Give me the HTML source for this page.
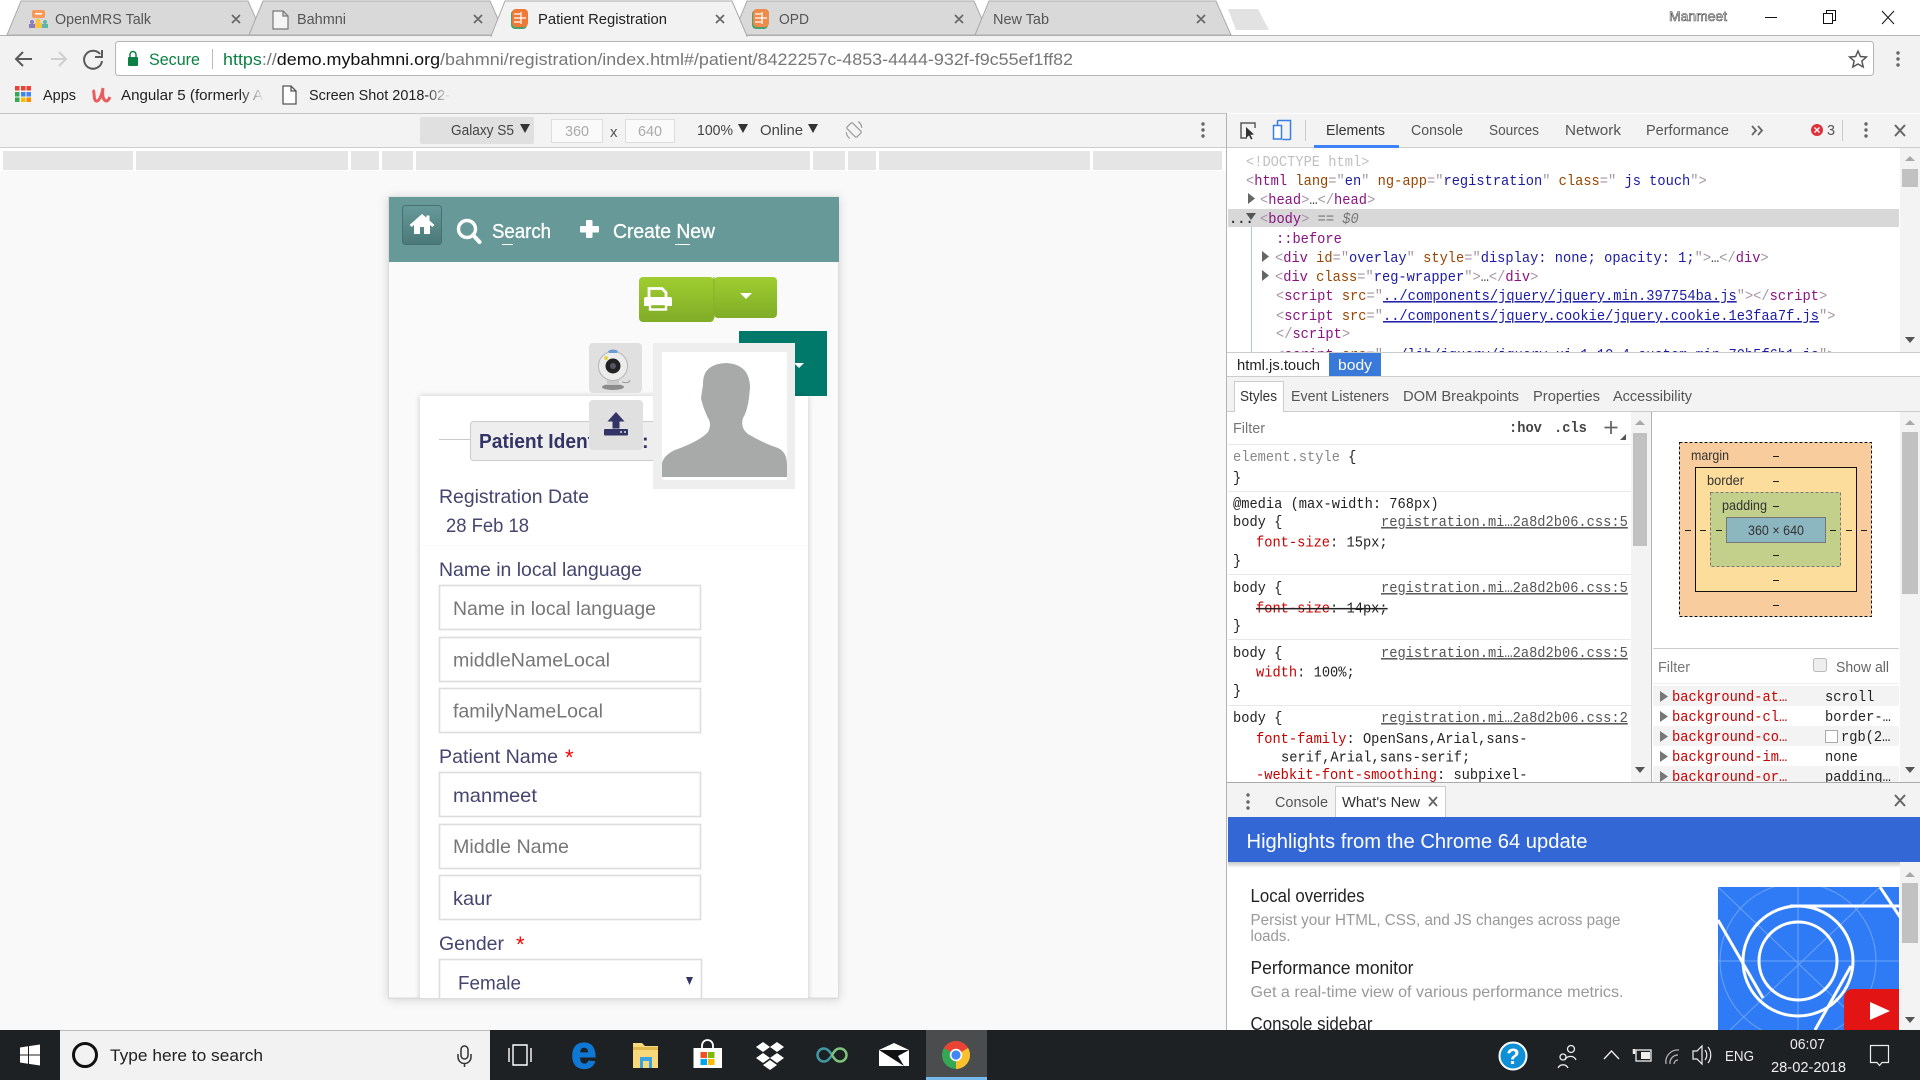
<!DOCTYPE html>
<html lang="en">
<head>
<meta charset="utf-8">
<title>Patient Registration</title>
<style>
html,body{margin:0;padding:0;width:1920px;height:1080px;overflow:hidden;background:#fff}
svg{display:block}
text{font-family:"Liberation Sans",Arial,sans-serif;font-size:15px;fill:#333;white-space:pre}
.m{font-family:"Liberation Mono",monospace;font-size:15px;fill:#222}
.tag{fill:#881280}.pu{fill:#a894a6}.an{fill:#994500}.av{fill:#1a1aa6}.pr{fill:#c80000}.lk{fill:#555;text-decoration:underline}
.t{fill:#555}.d{fill:#5a5a5a}
.o{font-size:19.5px;fill:#45456f}
.ph{font-size:19.5px;fill:#777}
.w{fill:#fff}
.tb{fill:#fff;stroke:#ddd;stroke-width:1.6}
</style>
</head>
<body>
<svg xmlns="http://www.w3.org/2000/svg" width="1920" height="1080" viewBox="0 0 1920 1080">
<defs>
<filter id="s" x="-10%" y="-10%" width="120%" height="120%"><feDropShadow dx="0" dy="0" stdDeviation="3" flood-color="#000" flood-opacity=".2"/></filter>
<filter id="s2" x="-10%" y="-10%" width="120%" height="120%"><feDropShadow dx="0" dy="1" stdDeviation="5" flood-color="#000" flood-opacity=".16"/></filter>
<clipPath id="vp"><rect x="380" y="197" width="470" height="801"/></clipPath>
<clipPath id="pic"><rect x="1718" y="887" width="181" height="143"/></clipPath>
<linearGradient id="home" x1="0" y1="0" x2="0" y2="1"><stop offset="0" stop-color="#669a9a"/><stop offset="1" stop-color="#4b7878"/></linearGradient>
<linearGradient id="gr" x1="0" y1="0" x2="0" y2="1"><stop offset="0" stop-color="#9fce30"/><stop offset="1" stop-color="#80ac27"/></linearGradient>
<linearGradient id="fade" x1="0" y1="0" x2="1" y2="0"><stop offset="0" stop-color="#f2f2f2" stop-opacity="0"/><stop offset="1" stop-color="#f2f2f2"/></linearGradient>
<linearGradient id="hs" x1="0" y1="0" x2="0" y2="1"><stop offset="0" stop-color="#000" stop-opacity=".22"/><stop offset="1" stop-color="#000" stop-opacity="0"/></linearGradient>
</defs>

<!-- window / tab strip -->
<rect width="1920" height="1080" fill="#fff"/>
<rect y="35" width="1920" height="78" fill="#f2f2f2"/>
<rect y="35" width="1920" height="1" fill="#b3b3b3"/>
<polygon points="7,35 21,1 248,1 263,35" fill="#d9d9d9" stroke="#aaa"/>
<polygon points="249,35 263,1 490,1 505,35" fill="#d9d9d9" stroke="#aaa"/>
<polygon points="733,35 747,1 974,1 989,35" fill="#d9d9d9" stroke="#aaa"/>
<polygon points="975,35 989,1 1216,1 1231,35" fill="#d9d9d9" stroke="#aaa"/>
<polygon points="491,36 505,1 732,1 747,36" fill="#f2f2f2" stroke="#aaa"/>
<rect x="492" y="35" width="254" height="2" fill="#f2f2f2"/>
<polygon points="1228,9 1258,9 1269,30 1236,30" fill="#e2e2e2"/>

<!-- tab icons -->
<rect x="32" y="10" width="13" height="8" rx="2" fill="#f79a5b"/><rect x="35" y="13" width="7" height="1.5" fill="#fff"/>
<circle cx="32" cy="22" r="2" fill="#8c7ac0"/><rect x="29" y="24" width="6" height="4" fill="#8c7ac0"/>
<circle cx="38" cy="21" r="2.4" fill="#f7c340"/><rect x="35" y="23" width="7" height="5" fill="#f7c340"/>
<circle cx="45" cy="22" r="2" fill="#5cb5a8"/><rect x="42" y="24" width="6" height="4" fill="#5cb5a8"/>
<path d="M273 11h10l5 5v13h-15z M283 11v5h5" fill="#f4f4f4" stroke="#777" stroke-width="1.2"/>
<rect x="511" y="10" width="16" height="19" rx="4" fill="#4aa36e"/><rect x="512" y="9" width="16" height="18" rx="4" fill="#ee7a35"/><path d="M514 14h6M514 18h12M514 22h6M521 12v12" stroke="#fff" stroke-width="1.3" fill="none"/>
<rect x="752" y="10" width="16" height="19" rx="4" fill="#4aa36e"/><rect x="753" y="9" width="16" height="18" rx="4" fill="#ee8a4a"/><path d="M755 14h6M755 18h12M755 22h6M762 12v12" stroke="#fff" stroke-width="1.3" fill="none"/>

<!-- tab text -->
<text x="55" y="24" textLength="96" lengthAdjust="spacingAndGlyphs" class="t">OpenMRS Talk</text>
<text x="297" y="24" textLength="49" lengthAdjust="spacingAndGlyphs" class="t">Bahmni</text>
<text x="538" y="24" textLength="129" lengthAdjust="spacingAndGlyphs" style="fill:#222">Patient Registration</text>
<text x="779" y="24" textLength="30" lengthAdjust="spacingAndGlyphs" class="t">OPD</text>
<text x="993" y="24" textLength="56" lengthAdjust="spacingAndGlyphs" class="t">New Tab</text>
<g stroke="#666" stroke-width="1.7" fill="none">
<path d="M232 15l8 8M240 15l-8 8M474 15l8 8M482 15l-8 8M716 15l8 8M724 15l-8 8M955 15l8 8M963 15l-8 8M1197 15l8 8M1205 15l-8 8"/>
</g>

<!-- window controls -->
<text x="1669" y="21" textLength="58" lengthAdjust="spacingAndGlyphs" style="font-size:14px;fill:#fff;stroke:#444;stroke-width:.6">Manmeet</text>
<path d="M1765 17.500h12" stroke="#111" stroke-width="1"/>
<path d="M1823.500 13.500h9v10h-9zM1826.500 13.500v-3h9v10h-3" fill="none" stroke="#111"/>
<path d="M1882 11l12 13M1894 11l-12 13" stroke="#111" stroke-width="1"/>

<!-- toolbar -->
<path d="M32 59H16M23 52l-7 7 7 7" fill="none" stroke="#5a5a5a" stroke-width="2"/>
<path d="M51 59h15M59 52l7 7-7 7" fill="none" stroke="#cfcfcf" stroke-width="2"/>
<path d="M100 54a9 9 0 1 0 2 7M102 50v7h-7" fill="none" stroke="#5a5a5a" stroke-width="2"/>
<rect x="115.500" y="41.500" width="1758" height="34" rx="3" fill="#fff" stroke="#b5b5b5"/>
<rect x="128" y="57" width="10" height="9" rx="1" fill="#0b8043"/><path d="M130 57v-2.500a3 3 0 0 1 6 0V57" fill="none" stroke="#0b8043" stroke-width="1.500"/>
<text x="149" y="65" textLength="51" lengthAdjust="spacingAndGlyphs" style="font-size:17px;fill:#0b8043">Secure</text>
<rect x="212" y="49" width="1" height="20" fill="#bbb"/>
<text x="223" y="65" textLength="850" lengthAdjust="spacingAndGlyphs" style="font-size:17px;fill:#777"><tspan style="fill:#0b8043">https</tspan><tspan style="fill:#777">://</tspan><tspan style="fill:#111">demo.mybahmni.org</tspan>/bahmni/registration/index.html#/patient/8422257c-4853-4444-932f-f9c55ef1ff82</text>
<path d="M1858 51l2.400 5.500 6 .5-4.500 4 1.300 6-5.200-3-5.200 3 1.300-6-4.500-4 6-.5z" fill="none" stroke="#555" stroke-width="1.500"/>
<g fill="#666"><circle cx="1898" cy="53" r="1.700"/><circle cx="1898" cy="59" r="1.700"/><circle cx="1898" cy="65" r="1.700"/></g>

<!-- bookmarks -->
<g>
<rect x="15" y="86" width="4.500" height="4.500" fill="#ea4335"/><rect x="21" y="86" width="4.500" height="4.500" fill="#ea4335"/><rect x="26.500" y="86" width="4.500" height="4.500" fill="#ea4335"/>
<rect x="15" y="92" width="4.500" height="4.500" fill="#34a853"/><rect x="21" y="92" width="4.500" height="4.500" fill="#4285f4"/><rect x="26.500" y="92" width="4.500" height="4.500" fill="#4285f4"/>
<rect x="15" y="97.500" width="4.500" height="4.500" fill="#34a853"/><rect x="21" y="97.500" width="4.500" height="4.500" fill="#fbbc05"/><rect x="26.500" y="97.500" width="4.500" height="4.500" fill="#fb8c00"/>
</g>
<text x="43" y="100" textLength="33" lengthAdjust="spacingAndGlyphs" style="fill:#222">Apps</text>
<path d="M93 90c2 2 0 9 3 11 3 1 6-6 7-13-1 7 0 12 3 13 2 0 3-2 4-4" fill="none" stroke="#e85d5d" stroke-width="3"/>
<text x="121" y="100" textLength="142" lengthAdjust="spacingAndGlyphs" style="fill:#222">Angular 5 (formerly A</text>
<rect x="240" y="85" width="24" height="20" fill="url(#fade)"/>
<path d="M283 86h8l5 5v13h-13zM291 86v5h5" fill="#fff" stroke="#555" stroke-width="1.300"/>
<text x="309" y="100" textLength="141" lengthAdjust="spacingAndGlyphs" style="fill:#222">Screen Shot 2018-02-</text>
<rect x="425" y="85" width="26" height="20" fill="url(#fade)"/>

<!-- page area -->
<rect y="113" width="1226" height="917" fill="#f9f9f9"/>
<rect y="113" width="1920" height="1" fill="#c4c4c4"/>
<rect y="114" width="1226" height="33" fill="#f3f3f3"/>
<rect y="147" width="1226" height="1" fill="#cdcdcd"/>
<rect y="148" width="1226" height="23" fill="#fff"/>
<rect x="420" y="117" width="114" height="27" rx="2" fill="#e0e0e0"/>
<text x="451" y="135" textLength="63" lengthAdjust="spacingAndGlyphs" style="fill:#444">Galaxy S5</text>
<polygon points="520,124 530,124 525,133" fill="#333"/>
<rect x="551.500" y="119.500" width="51" height="23" fill="#fafafa" stroke="#ddd"/>
<text x="565" y="136" textLength="24" lengthAdjust="spacingAndGlyphs" style="fill:#aaa">360</text>
<text x="610" y="137" style="fill:#555;font-size:15px">x</text>
<rect x="625.500" y="119.500" width="49" height="23" fill="#fafafa" stroke="#ddd"/>
<text x="638" y="136" textLength="24" lengthAdjust="spacingAndGlyphs" style="fill:#aaa">640</text>
<text x="697" y="135" textLength="36" lengthAdjust="spacingAndGlyphs" style="fill:#444">100%</text>
<polygon points="738,124 748,124 743,133" fill="#333"/>
<text x="760" y="135" textLength="43" lengthAdjust="spacingAndGlyphs" style="fill:#444">Online</text>
<polygon points="808,124 818,124 813,133" fill="#333"/>
<g transform="rotate(-45 854 130)" fill="none" stroke="#999" stroke-width="1.200"><rect x="850" y="123" width="8" height="14" rx="1.500"/><path d="M845 133a9 9 0 0 1 2-7M863 127a9 9 0 0 1-2 7"/></g>
<g fill="#666"><circle cx="1203" cy="124" r="1.700"/><circle cx="1203" cy="130" r="1.700"/><circle cx="1203" cy="136" r="1.700"/></g>

<!-- media query bars -->
<g fill="#e5e5e5">
<rect x="3" y="151" width="130" height="19"/><rect x="136" y="151" width="212" height="19"/><rect x="351" y="151" width="28" height="19"/><rect x="382" y="151" width="31" height="19"/><rect x="416" y="151" width="394" height="19"/><rect x="813" y="151" width="32" height="19"/><rect x="848" y="151" width="28" height="19"/><rect x="879" y="151" width="211" height="19"/><rect x="1093" y="151" width="129" height="19"/>
</g>

<!-- phone viewport -->
<rect x="388.500" y="197" width="450" height="801" fill="#fafafa" stroke="#dcdcdc" filter="url(#s2)"/>
<g clip-path="url(#vp)">
<rect x="389" y="197" width="450" height="65" fill="#689999"/>
<rect x="402.500" y="205.500" width="39" height="39" rx="3" fill="url(#home)" stroke="#487070"/>
<path d="M422 214l-12.500 11 2.200 2 2.300-2V234h6v-7h4v7h6v-9l2.300 2 2.200-2-5-4.500v-5h-3v2.300z" fill="#fff"/>
<circle cx="467" cy="229" r="8.500" fill="none" stroke="#fff" stroke-width="3.400"/><path d="M473 235l6.500 7" stroke="#fff" stroke-width="4" stroke-linecap="round"/>
<text x="492" y="238" textLength="59" lengthAdjust="spacingAndGlyphs" style="font-size:20px;fill:#fff;stroke:#fff;stroke-width:.3">Search</text>
<rect x="502" y="244" width="11" height="1" fill="#fff"/>
<rect x="586" y="220" width="6.500" height="18" fill="#fff" rx="1"/><rect x="580" y="226" width="19" height="6.500" fill="#fff" rx="1"/>
<text x="613" y="238" textLength="102" lengthAdjust="spacingAndGlyphs" style="font-size:20px;fill:#fff;stroke:#fff;stroke-width:.3">Create New</text>
<rect x="675" y="244" width="15" height="1" fill="#fff"/>

<!-- buttons -->
<rect x="639" y="277" width="75" height="45" rx="4" fill="url(#gr)"/>
<rect x="714" y="277" width="63" height="41" rx="4" fill="url(#gr)"/>
<rect x="713.500" y="277" width="1" height="41" fill="#86b02a"/>
<path d="M649 297v-8.500h13l4 4V297" fill="none" stroke="#fff" stroke-width="2.800"/>
<path d="M646 297h24a2 2 0 0 1 2 2v7h-5v-3h-18v3h-5v-7a2 2 0 0 1 2-2z" fill="#fff"/>
<rect x="650" y="304" width="16" height="5.500" fill="none" stroke="#fff" stroke-width="2.400"/>
<polygon points="740,293 752,293 746,299" fill="#fff"/>

<rect x="739" y="331" width="88" height="65" fill="#00796b"/>
<polygon points="794,363 804,363 799,368" fill="#fff"/>

<!-- card -->
<rect x="420" y="396" width="388" height="640" fill="#fff" filter="url(#s)"/>
<rect x="421" y="545" width="386" height="1" fill="#f9f9f9"/>
<rect x="439" y="439" width="32" height="1" fill="#ccc"/>
<rect x="470.500" y="421.500" width="220" height="39" rx="3" fill="#eee" stroke="#ccc"/>
<text x="479" y="448" textLength="161" lengthAdjust="spacingAndGlyphs" style="font-size:20px;font-weight:700;fill:#333366">Patient Identifiers</text>
<text x="642" y="448" style="font-size:20px;font-weight:700;fill:#333366">:</text>

<text x="439" y="503" textLength="150" lengthAdjust="spacingAndGlyphs" class="o">Registration Date</text>
<text x="446" y="532" textLength="83" lengthAdjust="spacingAndGlyphs" class="o">28 Feb 18</text>
<text x="439" y="576" textLength="203" lengthAdjust="spacingAndGlyphs" class="o">Name in local language</text>
<rect x="439.500" y="585.500" width="261" height="44" class="tb"/>
<text x="453" y="615" textLength="203" lengthAdjust="spacingAndGlyphs" class="ph">Name in local language</text>
<rect x="439.500" y="637.500" width="261" height="44" class="tb"/>
<text x="453" y="666.500" textLength="157" lengthAdjust="spacingAndGlyphs" class="ph">middleNameLocal</text>
<rect x="439.500" y="688.500" width="261" height="44" class="tb"/>
<text x="453" y="717.500" textLength="150" lengthAdjust="spacingAndGlyphs" class="ph">familyNameLocal</text>
<text x="439" y="763" textLength="119" lengthAdjust="spacingAndGlyphs" class="o">Patient Name</text>
<text x="565" y="765" style="font-size:22px;fill:#f00">*</text>
<rect x="439.500" y="772.500" width="261" height="44" class="tb"/>
<text x="453" y="802" textLength="84" lengthAdjust="spacingAndGlyphs" class="o">manmeet</text>
<rect x="439.500" y="824.500" width="261" height="44" class="tb"/>
<text x="453" y="853" textLength="116" lengthAdjust="spacingAndGlyphs" class="ph">Middle Name</text>
<rect x="439.500" y="875.500" width="261" height="44" class="tb"/>
<text x="453" y="905" textLength="39" lengthAdjust="spacingAndGlyphs" class="o">kaur</text>
<text x="439" y="950" textLength="65" lengthAdjust="spacingAndGlyphs" class="o">Gender</text>
<text x="516" y="952" style="font-size:22px;fill:#f00">*</text>
<rect x="439.500" y="959.500" width="262" height="60" class="tb"/>
<text x="458" y="989.500" textLength="63" lengthAdjust="spacingAndGlyphs" class="o">Female</text>
<polygon points="686,977 693,977 689.500,985" fill="#333366"/>

<!-- webcam -->
<rect x="589" y="343" width="53" height="50" rx="4" fill="#e0e0e0"/>
<ellipse cx="613" cy="387" rx="11" ry="3" fill="#8c8c8c"/>
<rect x="607" y="378" width="12" height="7" fill="#c9c9c9"/>
<circle cx="613" cy="366" r="14.500" fill="#ececec" stroke="#b5b5b5"/>
<path d="M608 351q5-3 10 0l-1 2h-8z" fill="#6c9bd6"/>
<circle cx="613" cy="366" r="7.500" fill="#222"/><circle cx="613" cy="366" r="3" fill="#556"/><circle cx="606" cy="358" r="2" fill="#e6d24a"/>
<path d="M622 382q7 2 8-2" fill="none" stroke="#999"/>

<!-- upload -->
<rect x="589" y="400" width="54" height="50" rx="4" fill="#e0e0e0"/>
<path d="M616 412l8.500 9.500h-5v7h-7v-7h-5z" fill="#333366"/>
<rect x="604" y="429" width="24" height="6.500" rx="1" fill="#333366"/>
<circle cx="621" cy="432" r="1" fill="#ddd"/><circle cx="625" cy="432" r="1" fill="#ddd"/>

<!-- photo -->
<rect x="653" y="343" width="142" height="146" fill="#eee"/>
<rect x="662" y="352" width="125" height="128" fill="#fff"/>
<path d="M662 477V463Q664 455 675 450 700 441 708 432 712 424 708 418 703 408 701 398 702 391 703 385 702 364 726 363 750 364 750 388L749 398Q747 412 743 418 740 428 748 434 765 444 778 448 787 452 787 465V477Z" fill="#a8aaa9"/>
</g>
<rect x="388" y="998" width="451" height="1" fill="#dcdcdc"/>

<!-- devtools -->
<rect x="1226" y="113" width="694" height="917" fill="#fff"/>
<rect x="1226" y="113" width="1" height="917" fill="#b3b3b3"/>
<rect x="1227" y="114" width="693" height="33" fill="#f3f3f3"/>
<rect x="1227" y="147" width="693" height="1" fill="#cdcdcd"/>
<path d="M1247 138h-6v-15h14v5" fill="none" stroke="#5a5a5a" stroke-width="1.500"/><path d="M1246 127v11l3-2.500 2 4 1.500-.8-2-3.800 3.500-.5z" fill="#333"/>
<rect x="1273.500" y="125.500" width="8" height="13.500" fill="#fff" stroke="#3a7ee4" stroke-width="1.500"/><path d="M1277.500 125v-3.500a1 1 0 0 1 1-1h12a1 1 0 0 1 0 0v18a1 1 0 0 1-1 1h-7" fill="none" stroke="#3a7ee4" stroke-width="1.500"/>
<rect x="1305" y="120" width="1" height="21" fill="#ccc"/>
<text x="1326" y="135" textLength="59" lengthAdjust="spacingAndGlyphs" style="fill:#333">Elements</text>
<rect x="1314" y="145" width="85" height="3" fill="#3e82f7"/>
<text x="1411" y="135" textLength="52" lengthAdjust="spacingAndGlyphs" class="t">Console</text>
<text x="1489" y="135" textLength="50" lengthAdjust="spacingAndGlyphs" class="t">Sources</text>
<text x="1565" y="135" textLength="56" lengthAdjust="spacingAndGlyphs" class="t">Network</text>
<text x="1646" y="135" textLength="83" lengthAdjust="spacingAndGlyphs" class="t">Performance</text>
<path d="M1752 126l4 4.500-4 4.500M1758 126l4 4.500-4 4.500" fill="none" stroke="#666" stroke-width="1.800"/>
<circle cx="1817" cy="130" r="6" fill="#e0303a"/><path d="M1814.500 127.500l5 5M1819.500 127.500l-5 5" stroke="#fff" stroke-width="1.300"/>
<text x="1827" y="135" textLength="8" lengthAdjust="spacingAndGlyphs" class="t">3</text>
<rect x="1842" y="120" width="1" height="21" fill="#ccc"/>
<g fill="#666"><circle cx="1866" cy="124" r="1.700"/><circle cx="1866" cy="130" r="1.700"/><circle cx="1866" cy="136" r="1.700"/></g>
<path d="M1895 125l10 11M1905 125l-10 11" stroke="#666" stroke-width="2"/>

<!-- elements tree -->
<rect x="1228" y="209" width="671" height="18" fill="#d8d8d8"/>
<rect x="1251" y="227" width="1" height="125" fill="#a9c8ee"/>
<text class="m" transform="translate(1246 166) scale(.915 1)" style="fill:#c0c0c0">&lt;!DOCTYPE html&gt;</text>
<text class="m" transform="translate(1246 185) scale(.915 1)"><tspan class="pu">&lt;</tspan><tspan class="tag">html</tspan> <tspan class="an">lang</tspan><tspan class="pu">="</tspan><tspan class="av">en</tspan><tspan class="pu">"</tspan> <tspan class="an">ng-app</tspan><tspan class="pu">="</tspan><tspan class="av">registration</tspan><tspan class="pu">"</tspan> <tspan class="an">class</tspan><tspan class="pu">="</tspan><tspan class="av"> js touch</tspan><tspan class="pu">"&gt;</tspan></text>
<polygon points="1248,193 1248,204 1255,198.500" fill="#666"/>
<text class="m" transform="translate(1260 204) scale(.915 1)"><tspan class="pu">&lt;</tspan><tspan class="tag">head</tspan><tspan class="pu">&gt;</tspan><tspan style="fill:#444">…</tspan><tspan class="pu">&lt;/</tspan><tspan class="tag">head</tspan><tspan class="pu">&gt;</tspan></text>
<text class="m" transform="translate(1229 223) scale(.915 1)" style="fill:#333;font-weight:700">...</text>
<polygon points="1246,213 1256,213 1251,220" fill="#555"/>
<text class="m" transform="translate(1260 223) scale(.915 1)"><tspan class="pu">&lt;</tspan><tspan class="tag">body</tspan><tspan class="pu">&gt;</tspan> <tspan style="fill:#777">== </tspan><tspan style="fill:#777;font-style:italic">$0</tspan></text>
<text class="m" transform="translate(1276 243) scale(.915 1)" style="fill:#881280">::before</text>
<polygon points="1262,251 1262,262 1269,256.500" fill="#666"/>
<text class="m" transform="translate(1275 262) scale(.915 1)"><tspan class="pu">&lt;</tspan><tspan class="tag">div</tspan> <tspan class="an">id</tspan><tspan class="pu">="</tspan><tspan class="av">overlay</tspan><tspan class="pu">"</tspan> <tspan class="an">style</tspan><tspan class="pu">="</tspan><tspan class="av">display: none; opacity: 1;</tspan><tspan class="pu">"&gt;</tspan><tspan style="fill:#444">…</tspan><tspan class="pu">&lt;/</tspan><tspan class="tag">div</tspan><tspan class="pu">&gt;</tspan></text>
<polygon points="1262,270 1262,281 1269,275.500" fill="#666"/>
<text class="m" transform="translate(1275 281) scale(.915 1)"><tspan class="pu">&lt;</tspan><tspan class="tag">div</tspan> <tspan class="an">class</tspan><tspan class="pu">="</tspan><tspan class="av">reg-wrapper</tspan><tspan class="pu">"&gt;</tspan><tspan style="fill:#444">…</tspan><tspan class="pu">&lt;/</tspan><tspan class="tag">div</tspan><tspan class="pu">&gt;</tspan></text>
<text class="m" transform="translate(1276 300) scale(.915 1)"><tspan class="pu">&lt;</tspan><tspan class="tag">script</tspan> <tspan class="an">src</tspan><tspan class="pu">="</tspan><tspan class="av" style="text-decoration:underline">../components/jquery/jquery.min.397754ba.js</tspan><tspan class="pu">"&gt;&lt;/</tspan><tspan class="tag">script</tspan><tspan class="pu">&gt;</tspan></text>
<text class="m" transform="translate(1276 320) scale(.915 1)"><tspan class="pu">&lt;</tspan><tspan class="tag">script</tspan> <tspan class="an">src</tspan><tspan class="pu">="</tspan><tspan class="av" style="text-decoration:underline">../components/jquery.cookie/jquery.cookie.1e3faa7f.js</tspan><tspan class="pu">"&gt;</tspan></text>
<text class="m" transform="translate(1276 338) scale(.915 1)"><tspan class="pu">&lt;/</tspan><tspan class="tag">script</tspan><tspan class="pu">&gt;</tspan></text>
<text class="m" transform="translate(1276 359) scale(.915 1)"><tspan class="pu">&lt;</tspan><tspan class="tag">script</tspan> <tspan class="an">src</tspan><tspan class="pu">="</tspan><tspan class="av" style="text-decoration:underline">../lib/jquery/jquery-ui-1.10.4.custom.min.70b5f6b1.js</tspan><tspan class="pu">"&gt;</tspan></text>
<!-- elements scrollbar -->
<rect x="1900" y="148" width="20" height="204" fill="#f3f3f3"/>
<rect x="1902" y="169" width="16" height="18" fill="#c1c1c1"/>
<polygon points="1905,161 1915,161 1910,156" fill="#a8a8a8"/>
<polygon points="1905,337 1915,337 1910,343" fill="#555"/>

<!-- breadcrumb -->
<rect x="1227" y="352" width="693" height="25" fill="#fff"/>
<rect x="1227" y="352" width="693" height="1" fill="#ccc"/>
<rect x="1227" y="376" width="693" height="1" fill="#ccc"/>
<text x="1237" y="370" textLength="83" lengthAdjust="spacingAndGlyphs" style="fill:#222">html.js.touch</text>
<rect x="1329" y="353" width="52" height="23" fill="#3879d9"/>
<text x="1338" y="370" textLength="34" lengthAdjust="spacingAndGlyphs" style="fill:#fff">body</text>

<!-- subtabs -->
<rect x="1227" y="377" width="693" height="34" fill="#f3f3f3"/>
<rect x="1227" y="411" width="693" height="1" fill="#ccc"/>
<rect x="1234.500" y="381.500" width="49" height="30" fill="#fff" stroke="#ccc"/>
<rect x="1235" y="410" width="48" height="2" fill="#fff"/>
<text x="1240" y="401" textLength="37" lengthAdjust="spacingAndGlyphs" style="fill:#333">Styles</text>
<text x="1291" y="401" textLength="98" lengthAdjust="spacingAndGlyphs" class="t">Event Listeners</text>
<text x="1403" y="401" textLength="116" lengthAdjust="spacingAndGlyphs" class="t">DOM Breakpoints</text>
<text x="1533" y="401" textLength="67" lengthAdjust="spacingAndGlyphs" class="t">Properties</text>
<text x="1613" y="401" textLength="79" lengthAdjust="spacingAndGlyphs" class="t">Accessibility</text>

<!-- styles pane -->
<text x="1233" y="433" textLength="32" lengthAdjust="spacingAndGlyphs" style="fill:#777">Filter</text>
<text class="m" transform="translate(1509 432) scale(.915 1)" style="font-weight:700;fill:#444">:hov</text>
<text class="m" transform="translate(1554 432) scale(.915 1)" style="font-weight:700;fill:#444">.cls</text>
<path d="M1611 421v13M1604.500 427.500h13" stroke="#666" stroke-width="1.800"/>
<polygon points="1626,434 1626,440 1620,440" fill="#555"/>
<g fill="#e8e8e8"><rect x="1228" y="444" width="403" height="1"/><rect x="1228" y="491" width="403" height="1"/><rect x="1228" y="574" width="403" height="1"/><rect x="1228" y="639" width="403" height="1"/><rect x="1228" y="705" width="403" height="1"/></g>
<text class="m" transform="translate(1233 461) scale(.915 1)"><tspan style="fill:#888">element.style</tspan> {</text>
<text class="m" transform="translate(1233 482) scale(.915 1)">}</text>
<text class="m" transform="translate(1233 508) scale(.915 1)">@media (max-width: 768px)</text>
<text class="m" transform="translate(1233 526) scale(.915 1)">body {</text>
<text class="m lk" transform="translate(1381 526) scale(.915 1)" style="fill:#555">registration.mi…2a8d2b06.css:5</text>
<text class="m" transform="translate(1256 546.500) scale(.915 1)"><tspan class="pr">font-size</tspan>: 15px;</text>
<text class="m" transform="translate(1233 565) scale(.915 1)">}</text>
<text class="m" transform="translate(1233 592) scale(.915 1)">body {</text>
<text class="m lk" transform="translate(1381 592) scale(.915 1)" style="fill:#555">registration.mi…2a8d2b06.css:5</text>
<text class="m" transform="translate(1256 612.500) scale(.915 1)" style="text-decoration:line-through"><tspan class="pr">font-size</tspan>: 14px;</text>
<text class="m" transform="translate(1233 630) scale(.915 1)">}</text>
<text class="m" transform="translate(1233 657) scale(.915 1)">body {</text>
<text class="m lk" transform="translate(1381 657) scale(.915 1)" style="fill:#555">registration.mi…2a8d2b06.css:5</text>
<text class="m" transform="translate(1256 676.500) scale(.915 1)"><tspan class="pr">width</tspan>: 100%;</text>
<text class="m" transform="translate(1233 695) scale(.915 1)">}</text>
<text class="m" transform="translate(1233 722) scale(.915 1)">body {</text>
<text class="m lk" transform="translate(1381 722) scale(.915 1)" style="fill:#555">registration.mi…2a8d2b06.css:2</text>
<text class="m" transform="translate(1256 743) scale(.915 1)"><tspan class="pr">font-family</tspan>: OpenSans,Arial,sans-</text>
<text class="m" transform="translate(1281 761.500) scale(.915 1)">serif,Arial,sans-serif;</text>
<text class="m" transform="translate(1256 779) scale(.915 1)"><tspan class="pr">-webkit-font-smoothing</tspan>: subpixel-</text>
<rect x="1631" y="412" width="20" height="370" fill="#f3f3f3"/>
<rect x="1633" y="433" width="14" height="113" fill="#c1c1c1"/>
<polygon points="1635,425 1645,425 1640,420" fill="#a8a8a8"/>
<polygon points="1635,767 1645,767 1640,773" fill="#555"/>
<rect x="1651" y="412" width="1" height="370" fill="#b3b3b3"/>

<!-- box model -->
<rect x="1679.500" y="442.500" width="192" height="174" fill="#f9cc9d" stroke="#111" stroke-dasharray="3 2"/>
<rect x="1695.500" y="467.500" width="161" height="124" fill="#fddd9b" stroke="#111"/>
<rect x="1710.500" y="492.500" width="130" height="74" fill="#c3d08b" stroke="#777" stroke-dasharray="3 2"/>
<rect x="1726.500" y="517.500" width="99" height="25" fill="#8cb6c0" stroke="#777"/>
<text x="1748" y="535" textLength="56" lengthAdjust="spacingAndGlyphs" style="font-size:14px;fill:#333">360 × 640</text>
<text x="1691" y="460" textLength="38" lengthAdjust="spacingAndGlyphs" style="font-size:14px;fill:#333">margin</text>
<text x="1707" y="485" textLength="37" lengthAdjust="spacingAndGlyphs" style="font-size:14px;fill:#333">border</text>
<text x="1722" y="510" textLength="45" lengthAdjust="spacingAndGlyphs" style="font-size:14px;fill:#333">padding</text>
<g fill="#222"><rect x="1773" y="456" width="6" height="1"/><rect x="1773" y="481" width="6" height="1"/><rect x="1773" y="506" width="6" height="1"/><rect x="1773" y="555" width="6" height="1"/><rect x="1773" y="580" width="6" height="1"/><rect x="1773" y="605" width="6" height="1"/><rect x="1685" y="530" width="6" height="1"/><rect x="1700" y="530" width="6" height="1"/><rect x="1716" y="530" width="6" height="1"/><rect x="1830" y="530" width="6" height="1"/><rect x="1846" y="530" width="6" height="1"/><rect x="1861" y="530" width="6" height="1"/></g>
<rect x="1653" y="648" width="246" height="1" fill="#ccc"/>
<text x="1658" y="672" textLength="32" lengthAdjust="spacingAndGlyphs" style="fill:#777">Filter</text>
<rect x="1813.500" y="658.500" width="13" height="13" rx="2" fill="#eee" stroke="#bbb"/>
<text x="1836" y="672" textLength="53" lengthAdjust="spacingAndGlyphs" style="fill:#666">Show all</text>
<rect x="1653" y="683" width="246" height="1" fill="#eee"/>
<rect x="1653" y="686" width="246" height="20" fill="#f3f3f3"/>
<rect x="1653" y="726" width="246" height="20" fill="#f3f3f3"/>
<rect x="1653" y="766" width="246" height="16" fill="#f3f3f3"/>
<g fill="#777"><polygon points="1660,691 1660,702 1668,696.500"/><polygon points="1660,711 1660,722 1668,716.500"/><polygon points="1660,731 1660,742 1668,736.500"/><polygon points="1660,751 1660,762 1668,756.500"/><polygon points="1660,771 1660,782 1668,776.500"/></g>
<text class="m" transform="translate(1672 701) scale(.915 1)" style="fill:#c80000">background-at…</text>
<text class="m" transform="translate(1672 721) scale(.915 1)" style="fill:#c80000">background-cl…</text>
<text class="m" transform="translate(1672 741) scale(.915 1)" style="fill:#c80000">background-co…</text>
<text class="m" transform="translate(1672 761) scale(.915 1)" style="fill:#c80000">background-im…</text>
<text class="m" transform="translate(1672 781) scale(.915 1)" style="fill:#c80000">background-or…</text>
<text class="m" transform="translate(1825 701) scale(.915 1)">scroll</text>
<text class="m" transform="translate(1825 721) scale(.915 1)">border-…</text>
<rect x="1825.500" y="730.500" width="12" height="12" fill="#fff" stroke="#aaa"/>
<text class="m" transform="translate(1841 741) scale(.915 1)">rgb(2…</text>
<text class="m" transform="translate(1825 761) scale(.915 1)">none</text>
<text class="m" transform="translate(1825 781) scale(.915 1)">padding…</text>
<rect x="1900" y="412" width="20" height="370" fill="#f3f3f3"/>
<rect x="1902" y="432" width="16" height="162" fill="#c1c1c1"/>
<polygon points="1905,425 1915,425 1910,420" fill="#a8a8a8"/>
<polygon points="1905,767 1915,767 1910,773" fill="#555"/>

<!-- drawer -->
<rect x="1227" y="782" width="693" height="248" fill="#fff"/>
<rect x="1227" y="782" width="693" height="35" fill="#f3f3f3"/>
<rect x="1227" y="782" width="693" height="1" fill="#aaa"/>
<g fill="#666"><circle cx="1248" cy="795" r="1.700"/><circle cx="1248" cy="802" r="1.700"/><circle cx="1248" cy="808" r="1.700"/></g>
<text x="1275" y="807" textLength="53" lengthAdjust="spacingAndGlyphs" class="t">Console</text>
<rect x="1335.500" y="786.500" width="110" height="31" fill="#fff" stroke="#ccc"/>
<text x="1342" y="807" textLength="78" lengthAdjust="spacingAndGlyphs" style="fill:#333">What's New</text>
<path d="M1429 797l8 9M1437 797l-8 9" stroke="#666" stroke-width="1.800"/>
<path d="M1895 795l10 11M1905 795l-10 11" stroke="#666" stroke-width="2"/>
<rect x="1228" y="817" width="692" height="45" fill="#3367d6"/>
<rect x="1228" y="862" width="692" height="6" fill="url(#hs)"/>
<text x="1246.500" y="848" textLength="341" lengthAdjust="spacingAndGlyphs" style="font-size:20px;fill:#fff">Highlights from the Chrome 64 update</text>
<text x="1250.500" y="902" textLength="114" lengthAdjust="spacingAndGlyphs" style="font-size:18px;fill:#222">Local overrides</text>
<text x="1250.500" y="925" textLength="370" lengthAdjust="spacingAndGlyphs" style="font-size:16px;fill:#999">Persist your HTML, CSS, and JS changes across page</text>
<text x="1250.500" y="941" textLength="40" lengthAdjust="spacingAndGlyphs" style="font-size:16px;fill:#999">loads.</text>
<text x="1250.500" y="974" textLength="163" lengthAdjust="spacingAndGlyphs" style="font-size:18px;fill:#222">Performance monitor</text>
<text x="1250.500" y="997" textLength="373" lengthAdjust="spacingAndGlyphs" style="font-size:16px;fill:#999">Get a real-time view of various performance metrics.</text>
<text x="1250.500" y="1030" textLength="122" lengthAdjust="spacingAndGlyphs" style="font-size:18px;fill:#222">Console sidebar</text>
<g clip-path="url(#pic)">
<rect x="1718" y="887" width="181" height="143" fill="#2f7bf5"/>
<g fill="none" stroke="#6aa3f8" stroke-width="1"><circle cx="1798" cy="961" r="78"/><path d="M1718 961h181M1798 887v143M1718 887l150 143M1880 887l-150 143"/></g>
<g fill="none" stroke="#fff" stroke-width="3"><circle cx="1798" cy="961" r="39"/><circle cx="1798" cy="961" r="55"/><path d="M1790 906h110M1718 920l45 78M1880 887l20 30M1815 1030l36-64"/></g>
<rect x="1844" y="989" width="70" height="60" rx="9" fill="#e31414"/>
<polygon points="1870,1002 1890,1011 1870,1020" fill="#fff"/>
</g>
<rect x="1900" y="862" width="20" height="168" fill="#f3f3f3"/>
<rect x="1902" y="883" width="16" height="60" fill="#c1c1c1"/>
<polygon points="1905,877 1915,877 1910,872" fill="#a8a8a8"/>
<polygon points="1905,1017 1915,1017 1910,1023" fill="#555"/>

<!-- taskbar -->
<rect y="1030" width="1920" height="50" fill="#1e2124"/>
<path d="M20 1047.500l8-1.200v8.200h-8zM29 1046.100l11-1.600v10h-11zM20 1055.500h8v8.200l-8-1.200zM29 1055.500h11v10l-11-1.600z" fill="#fff"/>
<rect x="60" y="1030" width="430" height="50" fill="#f2f2f2"/>
<rect x="60" y="1030" width="430" height="1" fill="#bbb"/>
<circle cx="85" cy="1055" r="11.500" fill="none" stroke="#111" stroke-width="3"/>
<text x="110" y="1061" textLength="153" lengthAdjust="spacingAndGlyphs" style="font-size:17px;fill:#222">Type here to search</text>
<rect x="461" y="1046" width="7" height="13" rx="3.500" fill="none" stroke="#333" stroke-width="1.500"/><path d="M458 1054v3a6.500 6.500 0 0 0 13 0v-3M464.500 1064v3" fill="none" stroke="#333" stroke-width="1.500"/>
<path d="M513 1045h14v20h-14zM509 1048v14M531 1048v14" fill="none" stroke="#fff" stroke-width="1.400"/>
<text x="571" y="1068" style="font-size:46px;font-weight:700;fill:#0f78d4;stroke:#0f78d4;stroke-width:1.200">e</text>
<path d="M633 1043h9l3 3h13v22h-25z" fill="#f7d97c"/><rect x="633" y="1047" width="25" height="3" fill="#e2b94f"/><rect x="640" y="1057" width="12" height="11" fill="#3aa3e3"/><rect x="643" y="1061" width="6" height="7" fill="#f7d97c"/>
<path d="M693.500 1048h28.500v20h-28.500z" fill="#fff"/><path d="M702 1048v-2.500a5.500 5.500 0 0 1 11 0v2.500" fill="none" stroke="#fff" stroke-width="1.800"/>
<rect x="700.500" y="1052" width="6.500" height="6" fill="#f25022"/><rect x="708" y="1052" width="6.500" height="6" fill="#7fba00"/><rect x="700.500" y="1059" width="6.500" height="6" fill="#00a4ef"/><rect x="708" y="1059" width="6.500" height="6" fill="#ffb900"/>
<g fill="#fff"><polygon points="763,1042 770,1047 763,1052 756,1047"/><polygon points="777,1042 784,1047 777,1052 770,1047"/><polygon points="763,1053 770,1058 763,1063 756,1058"/><polygon points="777,1053 784,1058 777,1063 770,1058"/><polygon points="770,1060 777,1065 770,1070 763,1065"/></g>
<path d="M832 1055c-3-5-6-6.500-8-6.500a6.500 6.500 0 0 0 0 13c2 0 5-1.500 8-6.500" fill="none" stroke="#3f9aa5" stroke-width="2.500"/><path d="M832 1055c3-5 5-6.500 8-6.500a6.500 6.500 0 0 1 0 13c-3 0-5-1.500-8-6.500" fill="none" stroke="#7ec47a" stroke-width="2.500"/>
<path d="M879 1050l15-7 15 7v16h-30z" fill="#fff"/><path d="M879 1050h30l-11 6 6 10z" fill="#111"/>
<rect x="926" y="1030" width="61" height="50" fill="#4a4c4e"/><rect x="926" y="1077" width="61" height="3" fill="#76b9ed"/>
<circle cx="956" cy="1055" r="14" fill="#34a853"/>
<path d="M956 1055L943.900 1048A14 14 0 0 1 968.100 1048Z" fill="#ea4335"/>
<path d="M956 1055L968.100 1048A14 14 0 0 1 956 1069Z" fill="#fbc02d"/>
<circle cx="956" cy="1055" r="6.200" fill="#fff"/><circle cx="956" cy="1055" r="4.600" fill="#4285f4"/>

<!-- tray -->
<circle cx="1513" cy="1056" r="13.500" fill="#0f8fd6" stroke="#fff" stroke-width="2"/>
<text x="1513" y="1064" text-anchor="middle" style="font-size:22px;font-weight:700;fill:#fff">?</text>
<g fill="none" stroke="#eee" stroke-width="1.300"><circle cx="1571" cy="1049" r="3.500"/><path d="M1565 1060a6 6 0 0 1 11 0"/><circle cx="1563" cy="1057" r="3"/><path d="M1558 1068a5.500 5.500 0 0 1 10 0"/></g>
<path d="M1604 1059l7.500-8 7.500 8" fill="none" stroke="#eee" stroke-width="1.300"/>
<rect x="1636" y="1050" width="15" height="11" fill="none" stroke="#eee" stroke-width="1.300"/><rect x="1641" y="1052" width="9" height="7" fill="#eee"/><path d="M1634 1049v5" stroke="#eee" stroke-width="2.500"/>
<path d="M1666 1064a12 12 0 0 1 13-14M1670 1064a8 8 0 0 1 8-9M1674 1064a4 4 0 0 1 4-4" fill="none" stroke="#bbb" stroke-width="1.200"/>
<path d="M1693 1051h4l5-5v18l-5-5h-4zM1705 1050a8 8 0 0 1 0 10M1708 1047a13 13 0 0 1 0 16" fill="none" stroke="#eee" stroke-width="1.200"/>
<text x="1725" y="1061" textLength="29" lengthAdjust="spacingAndGlyphs" style="fill:#eee">ENG</text>
<text x="1790" y="1049" textLength="35" lengthAdjust="spacingAndGlyphs" style="fill:#eee">06:07</text>
<text x="1771" y="1072" textLength="75" lengthAdjust="spacingAndGlyphs" style="fill:#eee">28-02-2018</text>
<path d="M1870.500 1045.500h18v17h-6.500l-2.500 3-2.500-3h-6.500z" fill="none" stroke="#eee" stroke-width="1.200"/>
</svg>
</body>
</html>
